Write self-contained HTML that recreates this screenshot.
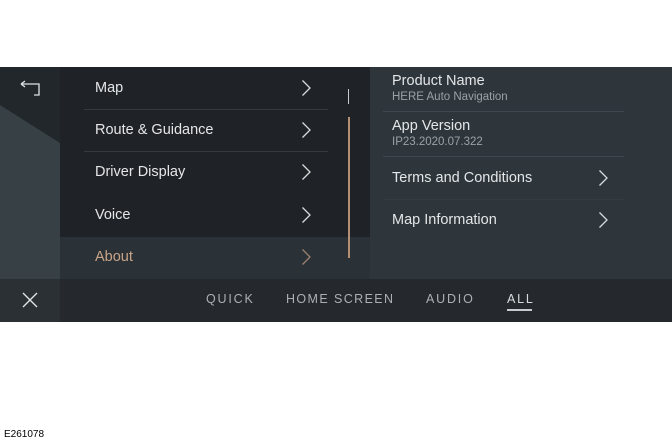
<!DOCTYPE html>
<html><head><style>
body{margin:0;width:672px;height:442px;background:#fff;position:relative;overflow:hidden;font-family:"Liberation Sans",sans-serif;}
.a{position:absolute}
.t{color:#e4e6e8;font-size:14.5px}
.s{color:#9aa2a8;font-size:11.5px}
.chev{position:absolute;width:10px;height:18px}
.sep{position:absolute;height:1px;background:#343a40}
.tab{position:absolute;top:292px;color:#aab0b5;font-size:12.5px;letter-spacing:1.8px}
</style></head><body>
<div class="a" style="left:0;top:67px;width:672px;height:255px;background:#1f2327"></div>
<div class="a" style="left:0;top:67px;width:60px;height:212px;background:#22272b"></div>
<svg class="a" style="left:0;top:67px" width="60" height="212"><polygon points="0,38 60,76 60,212 0,212" fill="#374145"/></svg>
<div class="a" style="left:0;top:279px;width:60px;height:43px;background:#2a3034"></div>
<svg class="a" style="left:19px;top:80px" width="22" height="16"><path d="M2 4 H20 V15 H15 M2 4 L6 1 M2 4 L6 7" stroke="#e0e3e5" stroke-width="1.3" fill="none"/></svg>
<svg class="a" style="left:21px;top:291px" width="18" height="18"><path d="M2 2 L16 16 M16 2 L2 16" stroke="#e0e3e5" stroke-width="1.4"/></svg>
<div class="a" style="left:60px;top:279px;width:612px;height:43px;background:#25292d"></div>
<div class="tab" style="left:206px">QUICK</div>
<div class="tab" style="left:286px;letter-spacing:1.4px">HOME SCREEN</div>
<div class="tab" style="left:426px">AUDIO</div>
<div class="tab" style="left:507px;color:#d8dbdd">ALL</div>
<div class="a" style="left:507px;top:309px;width:25px;height:2px;background:#c8ccd0"></div>
<div class="a" style="left:60px;top:237px;width:310px;height:42px;background:#2b3237"></div>
<div class="a t" style="left:95px;top:80px">Map</div>
<div class="sep" style="left:84px;top:109px;width:244px"></div>
<div class="a t" style="left:95px;top:122px">Route &amp; Guidance</div>
<div class="sep" style="left:84px;top:151px;width:244px"></div>
<div class="a t" style="left:95px;top:164px">Driver Display</div>
<div class="a t" style="left:95px;top:207px">Voice</div>
<div class="a t" style="left:95px;top:249px;color:#c9a487">About</div>
<svg class="chev" style="left:301px;top:79px"><path d="M1.5 1.5 L9 9 L1.5 16.5" stroke="#d8dbdd" stroke-width="1.3" fill="none"/></svg>
<svg class="chev" style="left:301px;top:121px"><path d="M1.5 1.5 L9 9 L1.5 16.5" stroke="#d8dbdd" stroke-width="1.3" fill="none"/></svg>
<svg class="chev" style="left:301px;top:163px"><path d="M1.5 1.5 L9 9 L1.5 16.5" stroke="#d8dbdd" stroke-width="1.3" fill="none"/></svg>
<svg class="chev" style="left:301px;top:206px"><path d="M1.5 1.5 L9 9 L1.5 16.5" stroke="#d8dbdd" stroke-width="1.3" fill="none"/></svg>
<svg class="chev" style="left:301px;top:248px"><path d="M1.5 1.5 L9 9 L1.5 16.5" stroke="#9a8070" stroke-width="1.3" fill="none"/></svg>
<div class="a" style="left:348px;top:89px;width:1px;height:15px;background:#c8ccd0"></div>
<div class="a" style="left:348px;top:117px;width:2px;height:141px;background:#b58f73"></div>
<div class="a" style="left:370px;top:67px;width:302px;height:212px;background:#2e363b"></div>
<div class="a t" style="left:392px;top:73px">Product Name</div>
<div class="a s" style="left:392px;top:91px">HERE Auto Navigation</div>
<div class="sep" style="left:383px;top:111px;width:241px;background:#3e474d"></div>
<div class="a t" style="left:392px;top:118px">App Version</div>
<div class="a s" style="left:392px;top:136px">IP23.2020.07.322</div>
<div class="sep" style="left:383px;top:156px;width:241px;background:#3e474d"></div>
<div class="a t" style="left:392px;top:170px">Terms and Conditions</div>
<div class="sep" style="left:383px;top:199px;width:241px;background:#343c42"></div>
<div class="a t" style="left:392px;top:212px">Map Information</div>
<svg class="chev" style="left:598px;top:169px"><path d="M1.5 1.5 L9 9 L1.5 16.5" stroke="#d8dbdd" stroke-width="1.3" fill="none"/></svg>
<svg class="chev" style="left:598px;top:211px"><path d="M1.5 1.5 L9 9 L1.5 16.5" stroke="#d8dbdd" stroke-width="1.3" fill="none"/></svg>
<div class="a" style="left:4px;top:429px;font-size:10px;color:#000">E261078</div>
</body></html>
